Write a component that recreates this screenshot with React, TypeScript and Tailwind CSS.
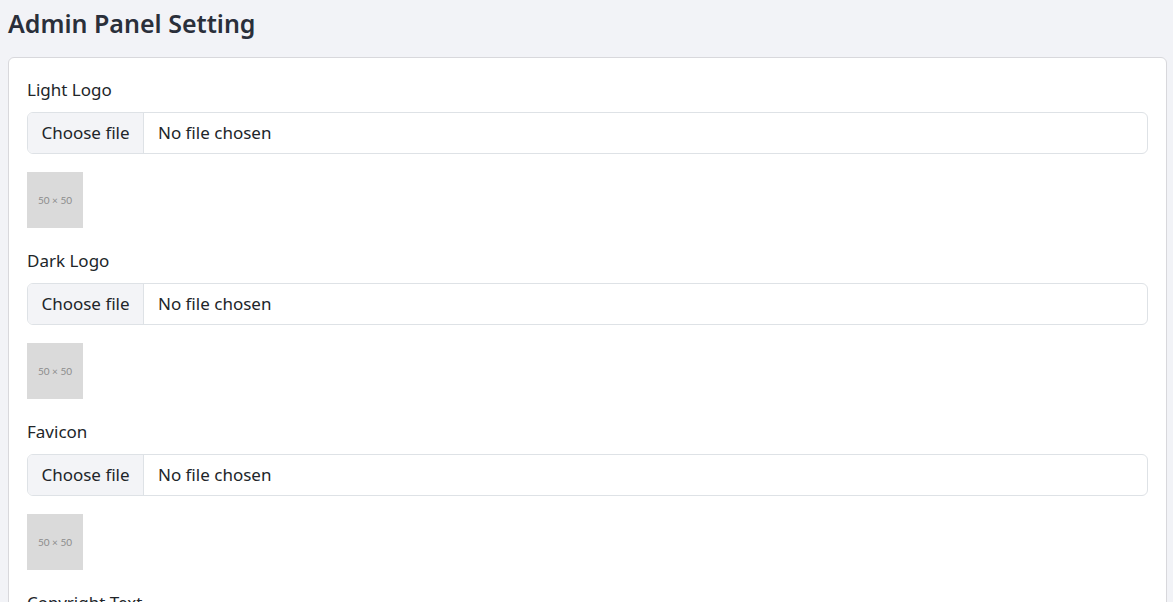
const fields = ["Light Logo", "Dark Logo", "Favicon", "Copyright Text"];

function FileField({ label }: { label: string }) {
    return (
        <div className="mb-[21px]">
            <label className="block text-[17px] leading-6 text-[#212529] mb-[10px]">{label}</label>
            <div className="flex h-[42px] border border-[#dee2e6] rounded-[6px] overflow-hidden text-[17px] text-[#212529]">
                <div className="w-[116px] flex items-center justify-center bg-[#f3f4f7] border-r border-[#dee2e6]">
                    Choose file
                </div>
                <div className="flex items-center pl-[14px]">No file chosen</div>
            </div>
            <div className="mt-[18px] w-[56px] h-[56px] bg-[#dadada] flex items-center justify-center text-[10px] text-[#8c8c8c] font-['Lato',sans-serif]">
                50 × 50
            </div>
        </div>
    );
}

export default function App() {
    return (
        <div className="min-h-screen bg-[#f2f3f7] font-['Noto_Sans',sans-serif] pl-[8px] pr-[6px]">
            <h1 className="h-[48px] flex items-center text-[25px] font-semibold text-[#2a2f3a]">Admin Panel Setting</h1>
            <div className="mt-[9px] bg-white border border-[#d8d8dc] rounded-[6px] px-[18px] pt-[20px]">
                {fields.map((f) => (
                    <FileField key={f} label={f} />
                ))}
            </div>
        </div>
    );
}
